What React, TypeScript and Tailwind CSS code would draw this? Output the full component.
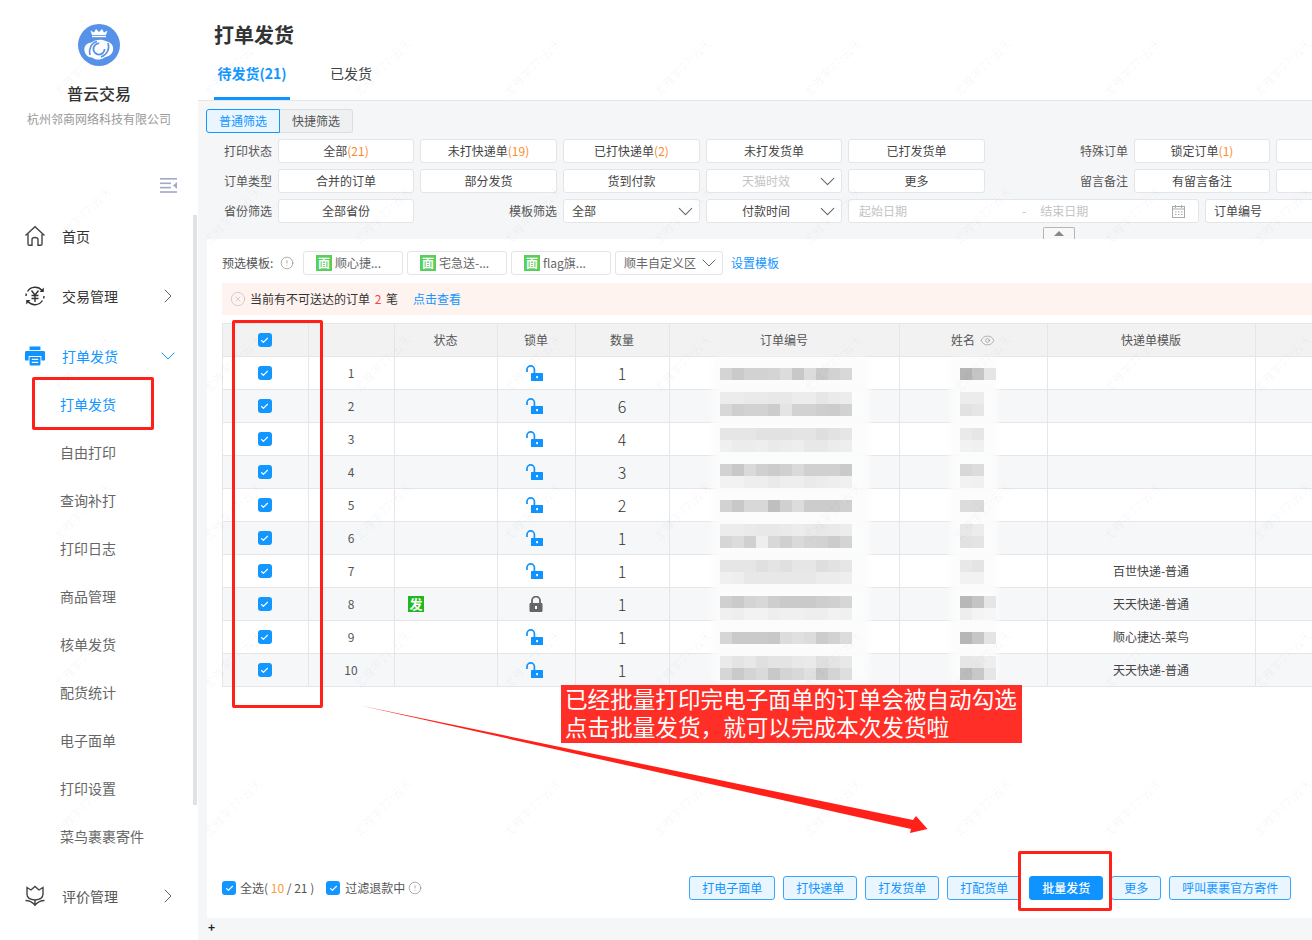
import { Check, ChevronDown, ChevronRight, CircleAlert, CircleX, Eye } from 'lucide-react';

const subMenu = ['自由打印', '查询补打', '打印日志', '商品管理', '核单发货', '配货统计', '电子面单', '打印设置', '菜鸟裹裹寄件'];

const rows = [
  { no: 1, qty: 1 },
  { no: 2, qty: 6 },
  { no: 3, qty: 4 },
  { no: 4, qty: 3 },
  { no: 5, qty: 2 },
  { no: 6, qty: 1 },
  { no: 7, qty: 1, tpl: '百世快递-普通' },
  { no: 8, qty: 1, tpl: '天天快递-普通', sent: true },
  { no: 9, qty: 1, tpl: '顺心捷达-菜鸟' },
  { no: 10, qty: 1, tpl: '天天快递-普通' },
];

// mosaic lines, 12px tall, index = (y - 368) / 12
const orderMosaic: Record<number, string> = {
  0: 'd4 ca d2 d2 d4 dc c8 dc ca d2 d8',
  2: 'ec ec ea ea e8 e8 ec ec e6 ea ec',
  3: 'd8 cf d2 d2 cc e4 d2 d2 ce cc d2',
  5: 'e6 e6 e6 e2 e2 e2 e4 e4 de e2 e6',
  6: 'f0 ec ec ee ea ec ee e8 e8 ec ee',
  8: 'd2 c8 da d0 cc d0 da d0 d0 d0 ca',
  9: 'f2 f2 ee ee ea ee ee ea ec ee f0',
  11: 'd2 c8 d8 d8 bf d0 dc cc cc cc d0',
  13: 'ec ec ea e8 e8 ea ec ea e8 ea ec',
  14: 'd6 dc d0 ee d8 d0 da d4 d2 cc d4',
  16: 'e6 e6 e6 e0 e4 e0 e6 e6 de e2 e6',
  17: 'f0 ee e8 e8 e8 e8 e8 e8 ec ec ee',
  19: 'd0 ca d4 d8 ce ca ca ca ce d0 d6',
  20: 'f0 ee f2 f2 ee f0 f0 ee ee f2 f0',
  22: 'd6 ca ca ca c8 dc e0 dc cc d2 dc',
  24: 'ea e4 e8 e0 e4 e4 e8 ea e0 e4 e8',
  25: 'd6 ca d4 da c8 d4 d8 e0 c8 d4 de',
};

const nameMosaic: Record<number, string> = {
  0: 'b5 c5 e5',
  2: 'ec ec',
  3: 'e2 e6',
  5: 'ea e6',
  6: 'f2 f0',
  8: 'd8 dc',
  9: 'f2 f0',
  11: 'dc da',
  13: 'e8 ec',
  14: 'e2 e4',
  16: 'e8 e4',
  17: 'f2 f2',
  19: 'b8 c4 e6',
  20: 'ee f4 f6',
  22: 'b6 c6 e4',
  24: 'e6 e8 ee',
  25: 'bc c8 e6',
};

function Mosaic({ data }: { data: Record<number, string> }) {
  return (
    <div className="flex flex-col">
      {Array.from({ length: 26 }).map((_, i) => (
        <div key={i} className="flex h-[12px]">
          {(data[i] ? data[i].split(' ') : []).map((c, j) => (
            <div key={j} className="w-[12px] h-[12px]" style={{ backgroundColor: `#${c}${c}${c}` }}></div>
          ))}
        </div>
      ))}
    </div>
  );
}

function Logo() {
  return (
    <svg width="42" height="42" viewBox="0 0 42 42">
      <circle cx="21" cy="21" r="21" fill="#5592e8" />
      {/* crown */}
      <path d="M14 11 L12.5 6.5 L16 8.5 L18 5 L21 8 L24 5 L26 8.5 L29.5 6.5 L28 11 Z" fill="#fff" />
      <rect x="14" y="11.8" width="14" height="1.4" fill="#fff" />
      {/* cloud */}
      <path d="M6.5 27 C5.5 22.5 9 18.5 13.5 18.5 C16.5 15.5 24.5 14.5 28.5 17.5 C33 18 36 22 35 26.5 C34 31 30 32.5 26.5 33.5 C22.5 36.5 17 36 14 33.5 C10 33.5 7.5 31 6.5 27 Z" fill="#fff" />
      {/* swirl */}
      <circle cx="21" cy="25" r="5.6" fill="none" stroke="#5592e8" strokeWidth="1.8" strokeDasharray="26 9" />
      <path d="M12 31 C10.5 25 13 19 19 17.5" fill="none" stroke="#5592e8" strokeWidth="1.6" />
      <path d="M30 19 C32 25 29 31 23 33" fill="none" stroke="#5592e8" strokeWidth="1.6" />
    </svg>
  );
}

function HomeIcon() {
  return (
    <svg width="22" height="22" viewBox="0 0 22 22" fill="none" stroke="#444" strokeWidth="1.4">
      <path d="M1.5 10.5 L11 1.8 L20.5 10.5" />
      <path d="M4 9 V19 Q4 20.3 5.3 20.3 H8 V14.5 Q8 12.5 11 12.5 Q14 12.5 14 14.5 V20.3 H16.7 Q18 20.3 18 19 V9" />
    </svg>
  );
}

function TradeIcon() {
  return (
    <svg width="22" height="22" viewBox="0 0 22 22" fill="none" stroke="#333" strokeWidth="1.4">
      <path d="M18 5.5 A9 9 0 0 0 3.5 6.5 M4 16.5 A9 9 0 0 0 18.5 15.5 M2 11 A9 9 0 0 1 2.4 8.5 M20 11 A9 9 0 0 1 19.6 13.5" />
      <path d="M19.8 2.5 V7 H15.6 Z M2.2 19.5 V15 H6.4 Z" fill="#333" stroke="none" />
      <path d="M7.5 5.5 L11 10 L14.5 5.5 M11 10 V17 M7.5 10.5 H14.5 M7.5 13.5 H14.5" />
    </svg>
  );
}

function PrinterIcon() {
  return (
    <svg width="20" height="20" viewBox="0 0 22 22" fill="#0f94ff">
      <path d="M5 0.5 H17 V4.5 H5 Z" />
      <path d="M1.5 5.5 H20.5 Q22 5.5 22 7 V15 Q22 16 20.5 16 H18 V11 H4 V16 H1.5 Q0 16 0 15 V7 Q0 5.5 1.5 5.5 Z" />
      <path d="M5 12 H17 V20 Q17 21.5 15.5 21.5 H6.5 Q5 21.5 5 20 Z M7.5 14 V15.4 H14.5 V14 Z M7.5 17.2 V18.6 H14.5 V17.2 Z" fillRule="evenodd" />
    </svg>
  );
}

function TulipIcon() {
  return (
    <svg width="22" height="22" viewBox="0 0 22 22" fill="none" stroke="#444" strokeWidth="1.4">
      <path d="M3 2.5 L7 5 L11 1.5 L15 5 L19 2.5 V9 Q19 14.5 11 15 Q3 14.5 3 9 Z" />
      <path d="M11 15 V21 M1.5 15.5 Q7 15.5 11 20 Q15 15.5 20.5 15.5" />
    </svg>
  );
}

function CollapseIcon() {
  return (
    <svg width="17" height="15" viewBox="0 0 17 15" fill="#a1a9c4">
      <rect x="0" y="0" width="17" height="1.6" />
      <rect x="0" y="4.5" width="11" height="1.6" />
      <rect x="0" y="8.8" width="11" height="1.6" />
      <rect x="0" y="13.2" width="17" height="1.6" />
      <path d="M17 4 V10.8 L13 7.4 Z" />
    </svg>
  );
}

function OpenLock() {
  return (
    <svg width="17" height="16" viewBox="0 0 17 16">
      <path d="M1 7 V4.6 A3.7 3.7 0 0 1 8.4 4.6 V8" fill="none" stroke="#0f94ff" strokeWidth="1.7" />
      <rect x="5" y="8" width="12" height="8" rx="0.5" fill="#0f94ff" />
      <rect x="10.2" y="11" width="1.8" height="2.2" fill="#fff" />
    </svg>
  );
}

function ClosedLock() {
  return (
    <svg width="14" height="16" viewBox="0 0 14 16">
      <path d="M3 7.5 V4.6 A4 4 0 0 1 11 4.6 V7.5" fill="none" stroke="#666" strokeWidth="1.8" />
      <rect x="0.5" y="7" width="13" height="9" rx="1" fill="#666" />
      <rect x="6" y="10" width="2" height="3" fill="#fff" />
    </svg>
  );
}

function CalendarIcon() {
  return (
    <svg width="13" height="13" viewBox="0 0 13 13" fill="none" stroke="#aaa" strokeWidth="1">
      <rect x="0.5" y="1.5" width="12" height="11" />
      <path d="M3.5 0 V3 M9.5 0 V3 M0.5 4 H12.5 M3 7 H4.5 M6 7 H7.5 M9 7 H10.5 M3 9.5 H4.5 M6 9.5 H7.5 M9 9.5 H10.5" />
    </svg>
  );
}

function CheckBox() {
  return (
    <span className="w-[14px] h-[14px] rounded-[3px] bg-[#1296ff] flex items-center justify-center shrink-0">
      <Check className="w-[9px] h-[9px] text-white" strokeWidth={3} />
    </span>
  );
}

function FilterBtn({ text, count, muted }: { text: string; count?: string; muted?: boolean }) {
  return (
    <div className={`h-[24px] bg-white border border-[#e4e5e8] rounded-[3px] flex items-center justify-center ${muted ? 'text-[#bbb]' : 'text-[#444]'}`}>
      {text}
      {count && <span className="text-[#fb8a2e]">{count}</span>}
    </div>
  );
}

function SelectBox({ text, muted, center }: { text: string; muted?: boolean; center?: boolean }) {
  return (
    <div className={`h-[24px] bg-white border border-[#e4e5e8] rounded-[3px] flex items-center justify-between pr-[1px] ${center ? 'pl-[35px]' : 'pl-[8px]'} ${muted ? 'text-[#c4c4c4]' : 'text-[#444]'}`}>
      <span>{text}</span>
      <ChevronDown className="w-[25px] h-[25px] text-[#666]" strokeWidth={1} />
    </div>
  );
}

function Label({ text }: { text: string }) {
  return <div className="h-[24px] flex items-center justify-end text-[#555] whitespace-nowrap">{text}</div>;
}

function Chip({ text }: { text: string }) {
  return (
    <div className="w-[100px] h-[24px] mr-[4px] bg-white border border-[#e4e5e8] rounded-[3px] flex items-center pl-[12px] gap-[3px] text-[#666]">
      <span className="w-[16px] h-[16px] bg-[#58cf5c] text-white text-[12px] leading-[16px] font-bold text-center">面</span>
      {text}
    </div>
  );
}

function ActionBtn({ text, w, primary }: { text: string; w: string; primary?: boolean }) {
  return (
    <div className={`${w} h-[24px] rounded-[3px] border flex items-center justify-center ${primary ? 'bg-[#0f94ff] border-[#0f94ff] text-white font-medium' : 'bg-[#e9f5ff] border-[#3ba7fb] text-[#1296ff]'}`}>
      {text}
    </div>
  );
}

function Cell({ className, children }: { className?: string; children?: React.ReactNode }) {
  return <div className={`border-r border-[#e6e6e8] pr-[1px] flex items-center justify-center ${className ?? ''}`}>{children}</div>;
}

const tableCols = 'grid grid-cols-[86px_86px_103px_78px_94px_230px_148px_208px_1fr]';

export default function App() {
  return (
    <div className="relative w-[1312px] h-[940px] overflow-hidden flex bg-white text-[12px] font-['Noto_Sans_CJK_SC',sans-serif]">
      {/* Sidebar */}
      <aside className="w-[198px] shrink-0 flex flex-col pt-[24px]">
        <div className="self-center w-[42px] h-[42px]">
          <Logo />
        </div>
        <div className="mt-[16px] h-[22px] leading-[22px] text-center text-[16px] font-medium text-[#333]">普云交易</div>
        <div className="mt-[5px] h-[20px] leading-[20px] text-center text-[12px] text-[#999]">杭州邻商网络科技有限公司</div>
        <div className="mt-[49px] self-end mr-[21px] h-[15px]">
          <CollapseIcon />
        </div>
        <div className="mt-[19px] h-[48px] flex items-center pl-[24px] text-[14px] text-[#333]">
          <span className="w-[38px]"><HomeIcon /></span>首页
        </div>
        <div className="mt-[12px] h-[48px] flex items-center pl-[24px] text-[14px] text-[#333]">
          <span className="w-[38px]"><TradeIcon /></span>交易管理
          <ChevronRight className="ml-[38px] w-[24px] h-[24px] text-[#666]" strokeWidth={1} />
        </div>
        <div className="mt-[12px] h-[48px] flex items-center pl-[24px] text-[14px] text-[#1296ff]">
          <span className="w-[38px] pl-[1px]"><PrinterIcon /></span>打单发货
          <ChevronDown className="ml-[38px] w-[24px] h-[24px] text-[#1296ff]" strokeWidth={1} />
        </div>
        <div className="h-[48px] flex items-center pl-[60px] text-[14px] text-[#1296ff]">打单发货</div>
        {subMenu.map((m) => (
          <div key={m} className="h-[48px] flex items-center pl-[60px] text-[14px] text-[#666]">{m}</div>
        ))}
        <div className="mt-[12px] h-[48px] flex items-center pl-[24px] text-[14px] text-[#555]">
          <span className="w-[38px]"><TulipIcon /></span>评价管理
          <ChevronRight className="ml-[38px] w-[24px] h-[24px] text-[#666]" strokeWidth={1} />
        </div>
      </aside>

      {/* Main */}
      <main className="flex-1 min-w-0 flex flex-col bg-[#f5f6f8]">
        <header className="h-[101px] shrink-0 bg-white border-b border-[#e3e5e8] pl-[16px]">
          <div className="pt-[21px] text-[20px] leading-[28px] font-bold text-[#333]">打单发货</div>
          <div className="flex">
            <div className="w-[76px] h-[51px] border-b-[3px] border-[#0f94ff] pt-[12px] text-center text-[14px] leading-[24px] font-bold text-[#1296ff] whitespace-nowrap">待发货(21)</div>
            <div className="ml-[40px] pt-[12px] text-[14px] leading-[24px] text-[#444]">已发货</div>
          </div>
        </header>

        {/* Filters */}
        <section className="h-[138px] shrink-0 pl-[8px] pt-[8px] overflow-hidden">
          <div className="flex h-[24px]">
            <div className="w-[74px] border border-[#1296ff] bg-[#e9f5ff] text-[#1296ff] rounded-l-[3px] flex items-center justify-center">普通筛选</div>
            <div className="w-[73px] border border-l-0 border-[#dcdde0] bg-[#eff0f2] text-[#555] rounded-r-[3px] flex items-center justify-center">快捷筛选</div>
          </div>
          <div className="mt-[6px] grid grid-cols-[66px_136px_137px_137px_136px_137px_137px_136px_136px] gap-x-[6px] gap-y-[6px] w-[1300px]">
            <Label text="打印状态" />
            <FilterBtn text="全部" count="(21)" />
            <FilterBtn text="未打快递单" count="(19)" />
            <FilterBtn text="已打快递单" count="(2)" />
            <FilterBtn text="未打发货单" />
            <FilterBtn text="已打发货单" />
            <Label text="特殊订单" />
            <FilterBtn text="锁定订单" count="(1)" />
            <FilterBtn text="" />

            <Label text="订单类型" />
            <FilterBtn text="合并的订单" />
            <FilterBtn text="部分发货" />
            <FilterBtn text="货到付款" />
            <SelectBox text="天猫时效" muted center />
            <FilterBtn text="更多" />
            <Label text="留言备注" />
            <FilterBtn text="有留言备注" />
            <FilterBtn text="" />

            <Label text="省份筛选" />
            <FilterBtn text="全部省份" />
            <Label text="模板筛选" />
            <SelectBox text="全部" />
            <SelectBox text="付款时间" center />
            <div className="col-[6/-1] flex gap-[6px]">
              <div className="w-[351px] h-[24px] bg-white border border-[#e4e5e8] rounded-[3px] flex items-center pl-[10px] text-[#c4c4c4]">
                <span>起始日期</span>
                <span className="ml-[115px]">-</span>
                <span className="ml-[14px]">结束日期</span>
                <span className="ml-[84px] flex"><CalendarIcon /></span>
              </div>
              <div className="flex-1 h-[24px] bg-white border border-[#e4e5e8] rounded-[3px] flex items-center pl-[8px] text-[#444]">订单编号</div>
            </div>
          </div>
          <div className="mt-[4px] ml-[837px] w-[32px] h-[12px] bg-[#f8f8f9] border border-b-0 border-[#b5b5b5] rounded-t-[2px] flex items-center justify-center">
            <span className="w-0 h-0 border-x-[5px] border-x-transparent border-b-[5px] border-b-[#888]"></span>
          </div>
        </section>

        {/* Order list */}
        <section className="flex-1 min-h-0 flex flex-col pl-[9px]">
          <div className="h-[679px] shrink-0 bg-white pl-[15px] flex flex-col">
            <div className="pt-[12px] flex items-center h-[36px] text-[#555]">
              <span className="w-[58px]">预选模板:</span>
              <CircleAlert className="w-[14px] h-[14px] text-[#777]" strokeWidth={1} />
              <span className="w-[9px]"></span>
              <Chip text="顺心捷..." />
              <Chip text="宅急送-..." />
              <Chip text="flag旗..." />
              <div className="w-[108px] h-[24px] bg-white border border-[#e4e5e8] rounded-[3px] flex items-center justify-between pl-[8px] pr-[1px] text-[#666]">
                顺丰自定义区
                <ChevronDown className="w-[24px] h-[24px] text-[#666]" strokeWidth={1} />
              </div>
              <span className="ml-[8px] text-[#1296ff]">设置模板</span>
            </div>
            <div className="mt-[8px] h-[32px] shrink-0 bg-[#fff3f0] flex items-center pl-[8px] text-[#333]">
              <CircleX className="w-[16px] h-[16px] text-[#c9b5b5]" strokeWidth={1} />
              <span className="ml-[4px]">当前有不可送达的订单 <span className="mx-[2px] text-[#f5424d]">2</span> 笔</span>
              <span className="ml-[15px] text-[#1296ff]">点击查看</span>
            </div>

            {/* Table */}
            <div className="mt-[8px] shrink-0 border-t border-l border-[#e6e6e8] text-[#555]">
              <div className={`${tableCols} h-[33px] bg-[#f2f2f3] border-b border-[#e6e6e8]`}>
                <Cell className="pr-[2px]"><CheckBox /></Cell>
                <Cell />
                <Cell>状态</Cell>
                <Cell>锁单</Cell>
                <Cell>数量</Cell>
                <Cell>订单编号</Cell>
                <Cell className="gap-[5px]">姓名<Eye className="w-[15px] h-[15px] text-[#888]" strokeWidth={1} /></Cell>
                <Cell>快递单模版</Cell>
                <div></div>
              </div>
              {rows.map((r) => (
                <div key={r.no} className={`${tableCols} h-[33px] border-b border-[#e6e6e8] ${r.no % 2 === 0 ? 'bg-[#f6f7f9]' : 'bg-white'}`}>
                  <Cell className="pr-[2px]"><CheckBox /></Cell>
                  <Cell>{r.no}</Cell>
                  <Cell className="justify-start pl-[13px]">
                    {r.sent && <span className="w-[16px] h-[16px] bg-[#1fb91f] text-white text-[13px] leading-[16px] font-bold text-center">发</span>}
                  </Cell>
                  <Cell className={r.sent ? '' : 'pr-[5px]'}>{r.sent ? <ClosedLock /> : <OpenLock />}</Cell>
                  <Cell className="text-[16px] font-light text-[#333]">{r.qty}</Cell>
                  <Cell />
                  <Cell />
                  <Cell className="text-[#444]">{r.tpl}</Cell>
                  <div></div>
                </div>
              ))}
            </div>

            {/* Bottom actions */}
            <div className="mt-auto mb-[18px] flex items-center h-[24px] text-[#555]">
              <CheckBox />
              <span className="ml-[4px]">全选(<span className="text-[#fb9a3c]"> 10 </span>/ 21 )</span>
              <span className="ml-[12px]"><CheckBox /></span>
              <span className="ml-[5px]">过滤退款中</span>
              <CircleAlert className="ml-[3px] w-[14px] h-[14px] text-[#777]" strokeWidth={1} />
              <div className="ml-[267px] flex gap-[8px]">
                <ActionBtn text="打电子面单" w="w-[86px]" />
                <ActionBtn text="打快递单" w="w-[74px]" />
                <ActionBtn text="打发货单" w="w-[74px]" />
                <ActionBtn text="打配货单" w="w-[74px]" />
                <ActionBtn text="批量发货" w="w-[74px]" primary />
                <ActionBtn text="更多" w="w-[50px]" />
                <ActionBtn text="呼叫裹裹官方寄件" w="w-[122px]" />
              </div>
            </div>
          </div>
          <div className="flex-1 pl-[1px] pb-[6px] flex items-center text-[#222] text-[12px] font-bold">+</div>
        </section>
      </main>

      {/* Sidebar scrollbar */}
      <div className="absolute left-[193px] top-[215px] w-[4px] h-[590px] bg-[#e2e2e2]"></div>

      {/* Blurred order numbers and names */}
      <div className="absolute left-[712px] top-[358px] w-[158px] h-[326px] bg-[#fcfcfc]/90 blur-[3px] rounded-[8px]"></div>
      <div className="absolute left-[950px] top-[358px] w-[48px] h-[326px] bg-[#fcfcfc]/90 blur-[3px] rounded-[8px]"></div>
      <div className="absolute left-[720px] top-[368px]"><Mosaic data={orderMosaic} /></div>
      <div className="absolute left-[960px] top-[368px]"><Mosaic data={nameMosaic} /></div>

      {/* Watermark */}
      <div className="absolute left-[7px] -top-[7px] grid grid-cols-[repeat(9,150px)] auto-rows-[148px] pointer-events-none">
        {Array.from({ length: 54 }).map((_, i) => (
          <div key={i} className="flex items-center justify-center">
            <span className="-rotate-45 text-[12px] text-black/[0.045] whitespace-nowrap">尤雅宇77:云天</span>
          </div>
        ))}
      </div>

      {/* Red annotations */}
      <div className="absolute left-[32px] top-[377px] w-[122px] h-[53px] border-[3px] border-[#ff2119] rounded-[2px]"></div>
      <div className="absolute left-[232px] top-[320px] w-[91px] h-[388px] border-[3px] border-[#ff2119] rounded-[2px]"></div>
      <div className="absolute left-[1018px] top-[851px] w-[94px] h-[60px] border-[3px] border-[#ff2119] rounded-[2px]"></div>
      <div className="absolute left-[561px] top-[685px] w-[461px] h-[58px] bg-[#ff2f27] pl-[4px] text-white text-[22.6px] leading-[28px] whitespace-nowrap">
        <div>已经批量打印完电子面单的订单会被自动勾选</div>
        <div>点击批量发货，就可以完成本次发货啦</div>
      </div>
      <svg className="absolute left-[350px] top-[700px]" width="590" height="140" viewBox="350 700 590 140">
        <polygon points="360,705.5 913,820 916,816 927.5,829 910,833 911,829" fill="#ff2119" />
      </svg>
    </div>
  );
}
